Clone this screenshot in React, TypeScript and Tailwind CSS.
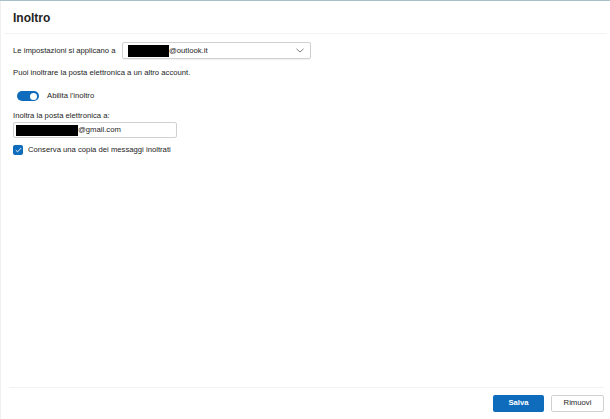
export default function App() {
  return (
    <div className="flex h-[419px] w-[610px] flex-col overflow-hidden border-t border-[#a9c0c9] bg-white font-['Liberation_Sans',Arial,sans-serif] text-[#242424]">
      <div className="flex flex-1 flex-col border-l border-[#f0f0f0]">
        <div className="mx-[3px] flex h-[33px] items-center border-b border-[#f3f3f3] px-[9px] pt-[1px]">
          <h1 className="text-[12px] font-bold">Inoltro</h1>
        </div>

        <div className="flex flex-1 flex-col px-[12px] text-[7.7px] leading-[10px]">
          <div className="mt-[8px] flex items-center">
            <span className="w-[109px]">Le impostazioni si applicano a</span>
            <div className="flex h-[17px] w-[189px] items-center rounded-[2px] border border-[#d1d1d1] px-[5px] shadow-[0_1px_1px_rgba(0,0,0,0.06)]">
              <span className="h-[12px] w-[41px] bg-black" />
              <span>@outlook.it</span>
              <svg className="ml-auto mr-[1px]" width="8" height="5" viewBox="0 0 8 5" fill="none">
                <path d="M0.5 0.8 L4 4 L7.5 0.8" stroke="#616161" strokeWidth="0.8" />
              </svg>
            </div>
          </div>

          <p className="mt-[9px]">Puoi inoltrare la posta elettronica a un altro account.</p>

          <div className="mt-[13px] flex items-center pl-[4px]">
            <span className="flex h-[10px] w-[22px] items-center justify-end rounded-full bg-[#0f6cbd] pr-[2px]">
              <span className="h-[7px] w-[7px] rounded-full bg-white" />
            </span>
            <span className="ml-[8px]">Abilita l&apos;inoltro</span>
          </div>

          <p className="mt-[10px]">Inoltra la posta elettronica a:</p>
          <div className="mt-[1px] flex h-[16px] w-[164px] items-center rounded-[2px] border border-[#d1d1d1] px-[2px]">
            <span className="h-[11px] w-[62px] bg-black" />
            <span>@gmail.com</span>
          </div>

          <div className="mt-[7px] flex items-center">
            <span className="flex h-[10px] w-[10px] items-center justify-center rounded-[2px] bg-[#0f6cbd]">
              <svg width="7" height="6" viewBox="0 0 7 6" fill="none">
                <path d="M0.8 3.2 L2.6 4.9 L6.2 1" stroke="white" strokeWidth="0.9" />
              </svg>
            </span>
            <span className="ml-[5px]">Conserva una copia dei messaggi inoltrati</span>
          </div>
        </div>

        <div className="ml-[8px] mr-[6px] flex h-[32px] items-center justify-end gap-[7px] border-t border-[#f3f3f3] pb-[1px]">
          <button className="h-[17px] w-[51px] rounded-[2px] bg-[#0f6cbd] text-[7.7px] font-bold text-white">Salva</button>
          <button className="h-[17px] w-[53px] rounded-[2px] border border-[#d1d1d1] bg-white text-[7.7px] text-[#242424]">Rimuovi</button>
        </div>
      </div>
    </div>
  );
}
